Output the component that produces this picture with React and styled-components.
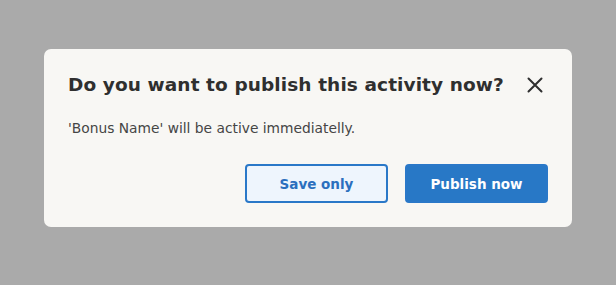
import React from "react";
import styled, { createGlobalStyle } from "styled-components";

const GlobalStyle = createGlobalStyle`
    html, body {
        margin: 0;
        padding: 0;
    }
    body {
        font-family: "DejaVu Sans", "Noto Sans", sans-serif;
    }
`;

const Overlay = styled.div`
    width: 616px;
    height: 285px;
    background: #aaaaaa;
    display: flex;
    justify-content: center;
    align-items: flex-start;
    padding-top: 49px;
    box-sizing: border-box;
`;

const Modal = styled.div`
    width: 528px;
    height: 178px;
    box-sizing: border-box;
    background: #f8f7f4;
    border-radius: 7px;
    padding: 22px 24px 24px 24px;
    display: flex;
    flex-direction: column;
`;

const Header = styled.div`
    display: flex;
    align-items: center;
    justify-content: space-between;
`;

const Title = styled.h2`
    margin: 0;
    font-size: 18.5px;
    font-weight: bold;
    color: #2f2f2f;
    letter-spacing: 0.1px;
    line-height: 28px;
`;

const CloseButton = styled.button`
    border: none;
    background: none;
    padding: 0;
    margin-right: 4px;
    width: 18px;
    height: 18px;
    display: flex;
    align-items: center;
    justify-content: center;
    cursor: pointer;
`;

const Message = styled.p`
    margin: 19px 0 0;
    font-size: 13.8px;
    color: #454545;
    line-height: 20px;
`;

const Actions = styled.div`
    display: flex;
    justify-content: flex-end;
    gap: 17px;
    margin-top: auto;
`;

const Button = styled.button`
    width: 143px;
    height: 39px;
    box-sizing: border-box;
    border-radius: 4px;
    font-family: inherit;
    font-size: 13.5px;
    font-weight: bold;
    cursor: pointer;
    border: 2px solid #2a78c8;
    background: ${(p) => (p.$primary ? "#2878c6" : "#eef5fd")};
    color: ${(p) => (p.$primary ? "#ffffff" : "#2b6fbe")};
`;

const App = () => {
    return (
        <>
            <GlobalStyle />
            <Overlay>
                <Modal>
                    <Header>
                        <Title>Do you want to publish this activity now?</Title>
                        <CloseButton aria-label="Close">
                            <svg width="16" height="16" viewBox="0 0 16 16">
                                <path
                                    d="M1.5 1.5 L14.5 14.5 M14.5 1.5 L1.5 14.5"
                                    stroke="#2f2f2f"
                                    strokeWidth="2"
                                    strokeLinecap="round"
                                />
                            </svg>
                        </CloseButton>
                    </Header>
                    <Message>'Bonus Name' will be active immediatelly.</Message>
                    <Actions>
                        <Button>Save only</Button>
                        <Button $primary>Publish now</Button>
                    </Actions>
                </Modal>
            </Overlay>
        </>
    );
};

export default App;
